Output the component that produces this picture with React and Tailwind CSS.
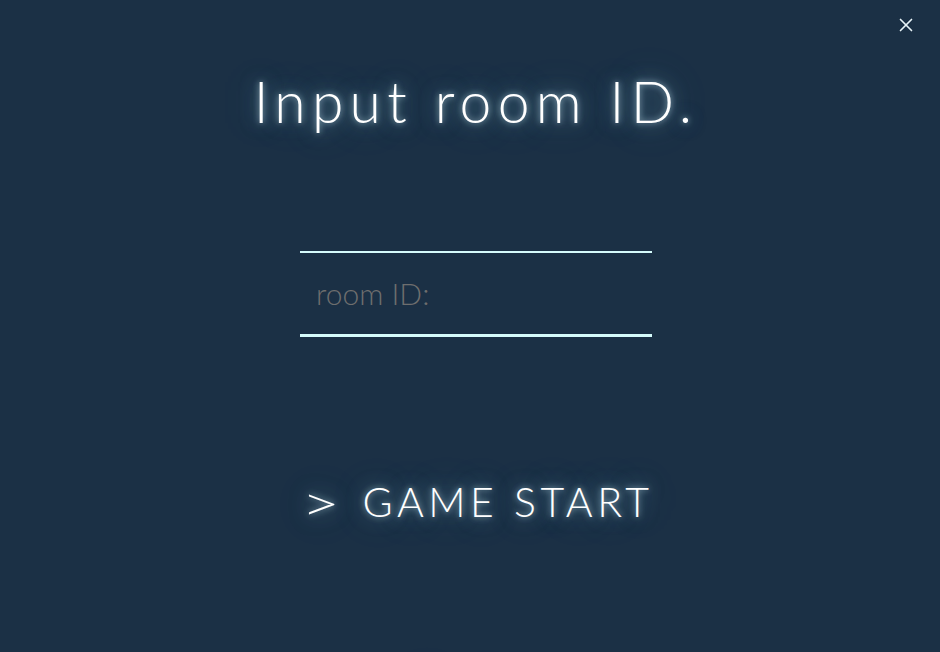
import { X } from "lucide-react";

const glow = {
  textShadow:
    "0 0 6px rgba(210,245,255,0.65), 0 0 18px rgba(150,210,230,0.5), 0 0 38px rgba(120,190,215,0.4)",
};

export default function App() {
  return (
    <div className="relative h-[652px] overflow-hidden bg-[#1b3045] text-white" style={{ fontFamily: "Lato, 'Open Sans', sans-serif" }}>
      <button className="absolute right-[23px] top-[14px] text-[#e8f4f8]">
        <X size={22} strokeWidth={1.8} />
      </button>

      <div className="flex flex-col items-center pl-[12px]">
        <h1 className="mt-[61px] text-[57px] font-light leading-[80px] tracking-[0.11em] text-white" style={glow}>
          Input room ID.
        </h1>

        <div className="mt-[110px] flex h-[86px] w-[352px] items-center border-t-2 border-b-[3px] border-[#d5fbfb] px-[16px]">
          <input
            className="w-full bg-transparent text-[30px] font-light text-white outline-none placeholder:text-[#6e6e6e]"
            placeholder="room ID:"
          />
        </div>

        <button className="mt-[135px] flex items-center gap-[27px] pl-[8px] font-light text-white" style={glow}>
          <span className="inline-block scale-x-[1.35] text-[50px] font-light leading-none">&gt;</span>
          <span className="text-[41px] leading-[60px] tracking-[0.11em]">GAME START</span>
        </button>

        <button className="mt-[130px] text-[41px] font-light tracking-[0.1em] text-white" style={glow}>
          BACK
        </button>
      </div>
    </div>
  );
}
